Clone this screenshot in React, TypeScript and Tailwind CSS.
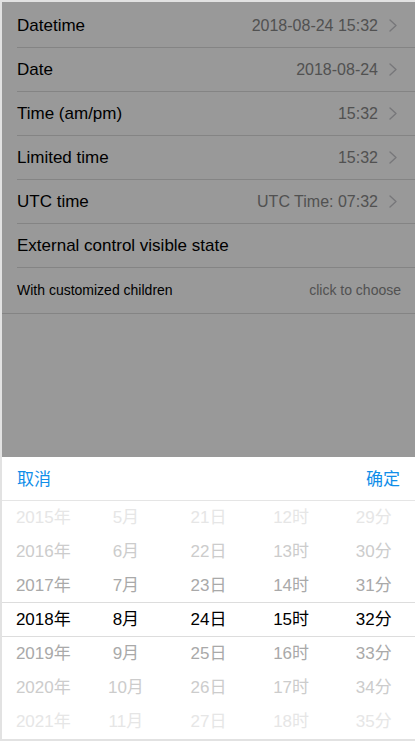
const rows = [
  { label: 'Datetime', value: '2018-08-24 15:32' },
  { label: 'Date', value: '2018-08-24' },
  { label: 'Time (am/pm)', value: '15:32' },
  { label: 'Limited time', value: '15:32' },
  { label: 'UTC time', value: 'UTC Time: 07:32' },
]

const columns = [
  ['2015年', '2016年', '2017年', '2018年', '2019年', '2020年', '2021年'],
  ['5月', '6月', '7月', '8月', '9月', '10月', '11月'],
  ['21日', '22日', '23日', '24日', '25日', '26日', '27日'],
  ['12时', '13时', '14时', '15时', '16时', '17时', '18时'],
  ['29分', '30分', '31分', '32分', '33分', '34分', '35分'],
]

const itemColors = [
  'text-[#e6e6e6]',
  'text-[#cccccc]',
  'text-[#a9a9a9]',
  'text-black',
  'text-[#a9a9a9]',
  'text-[#cccccc]',
  'text-[#e6e6e6]',
]

function Arrow() {
  return (
    <svg className="ml-[11px] h-[13px] w-[8px] shrink-0" viewBox="0 0 8 13" fill="none">
      <path d="M1 1l6 5.5L1 12" stroke="#c7c7cc" strokeWidth={1.4} strokeLinecap="round" strokeLinejoin="round" />
    </svg>
  )
}

export default function App() {
  return (
    <div
      className="flex h-[741px] w-full flex-col border-t-2 border-b-2 border-l-2 border-[#e2e2e2] bg-white"
      style={{ fontFamily: '"Liberation Sans", "Noto Sans CJK SC", sans-serif' }}
    >
      {/* List with mask */}
      <div className="relative flex-1 overflow-hidden bg-white">
        <div className="border-b border-[#dddddd] pt-[2px]">
          {rows.map((row) => (
            <div key={row.label} className="flex h-[44px] items-center pl-[15px]">
              <div className="flex h-full flex-1 items-center border-b border-[#dddddd] pr-[18px]">
                <span className="flex-1 text-[17px] text-black">{row.label}</span>
                <span className="text-[16px] text-[#888888]">{row.value}</span>
                <Arrow />
              </div>
            </div>
          ))}
          <div className="flex h-[44px] items-center pl-[15px]">
            <div className="flex h-full flex-1 items-center border-b border-[#dddddd] pr-[15px]">
              <span className="text-[17px] text-black">External control visible state</span>
            </div>
          </div>
          <div className="flex h-[45px] items-center justify-between pr-[14px] pl-[15px] text-[14px]">
            <span className="text-black">With customized children</span>
            <span className="text-[#888888]">click to choose</span>
          </div>
        </div>
        <div className="absolute inset-0 bg-black/40" />
      </div>

      {/* Picker popup */}
      <div className="bg-white">
        <div className="flex h-[44px] items-center justify-between border-b border-[#e5e5e5] px-[15px] pt-[2px] text-[17px] text-[#108ee9]">
          <span>取消</span>
          <span>确定</span>
        </div>
        <div className="relative grid h-[238px] grid-cols-5">
          {columns.map((col, ci) => (
            <div key={ci} className="flex flex-col">
              {col.map((item, i) => (
                <div
                  key={item}
                  className={`flex h-[34px] items-center justify-center text-[17px] ${itemColors[i]}`}
                >
                  {item}
                </div>
              ))}
            </div>
          ))}
          <div className="pointer-events-none absolute inset-x-0 top-[101px] h-[35px] border-y border-[#dddddd]" />
        </div>
      </div>
    </div>
  )
}
